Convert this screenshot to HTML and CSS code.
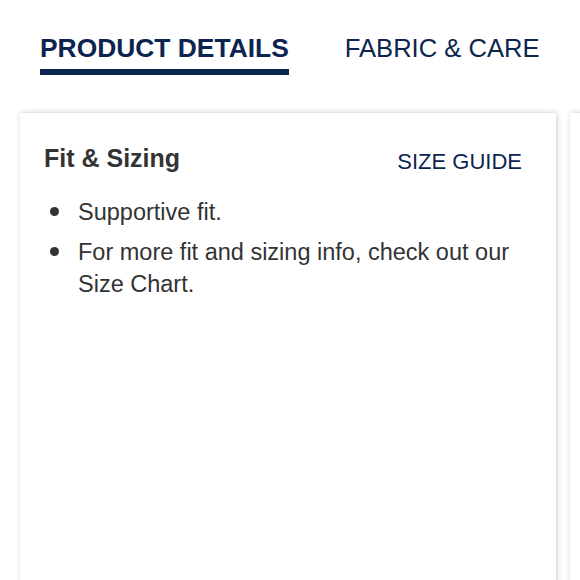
FILE: index.html
```html
<!DOCTYPE html>
<html lang="en">
<head>
<meta charset="utf-8">
<title>Product Details</title>
<link rel="stylesheet" href="styles.css">
</head>
<body>
<div class="page">
  <nav class="tabs">
    <div class="tab tab-active">PRODUCT DETAILS</div>
    <div class="tab">FABRIC &amp; CARE</div>
  </nav>
  <div class="cards">
    <section class="card">
      <div class="card-head">
        <h2 class="card-title">Fit &amp; Sizing</h2>
        <a class="size-guide">SIZE GUIDE</a>
      </div>
      <ul class="bullets">
        <li class="bullet-item"><span class="dot"></span><span class="bullet-text">Supportive fit.</span></li>
        <li class="bullet-item"><span class="dot"></span><span class="bullet-text">For more fit and sizing info, check out our Size Chart.</span></li>
      </ul>
    </section>
    <section class="card card-next"></section>
  </div>
</div>
</body>
</html>
```

FILE: styles.css
```css
html, body {
  margin: 0;
  padding: 0;
  background: #ffffff;
}

.page {
  width: 580px;
  height: 580px;
  overflow: hidden;
  font-family: "Liberation Sans", Arial, sans-serif;
}

.tabs {
  display: flex;
  align-items: flex-start;
  gap: 56px;
  padding: 33px 0 0 40px;
}

.tab {
  font-size: 25.6px;
  line-height: 30px;
  color: #0c2550;
  padding-bottom: 6px;
  border-bottom: 6px solid transparent;
  white-space: nowrap;
}

.tab-active {
  font-size: 26.4px;
  font-weight: bold;
  border-bottom-color: #0c2550;
}

.cards {
  display: flex;
  gap: 14px;
  margin-top: 38px;
  padding-left: 20px;
}

.card {
  flex: 0 0 536px;
  height: 500px;
  background: #ffffff;
  box-shadow: 1px 0 6px rgba(0, 0, 0, 0.18), 0 -1px 3px rgba(0, 0, 0, 0.04);
  padding: 30px 34px 0 24px;
  box-sizing: border-box;
}

.card-next {
  flex: 0 0 200px;
  padding: 0;
}

.card-head {
  display: flex;
  justify-content: space-between;
  align-items: flex-start;
}

.card-title {
  margin: 0;
  font-size: 25px;
  line-height: 30px;
  font-weight: bold;
  color: #333333;
}

.size-guide {
  margin-top: 4px;
  font-size: 22px;
  line-height: 30px;
  color: #0c2550;
}

.bullets {
  list-style: none;
  margin: 19px 0 0 6px;
  padding: 0;
  display: flex;
  flex-direction: column;
  gap: 8px;
}

.bullet-item {
  display: flex;
  gap: 19px;
  font-size: 23.5px;
  line-height: 32px;
  color: #333333;
}

.dot {
  flex: 0 0 9px;
  width: 9px;
  height: 9px;
  margin-top: 11px;
  border-radius: 50%;
  background: #333333;
}
```
